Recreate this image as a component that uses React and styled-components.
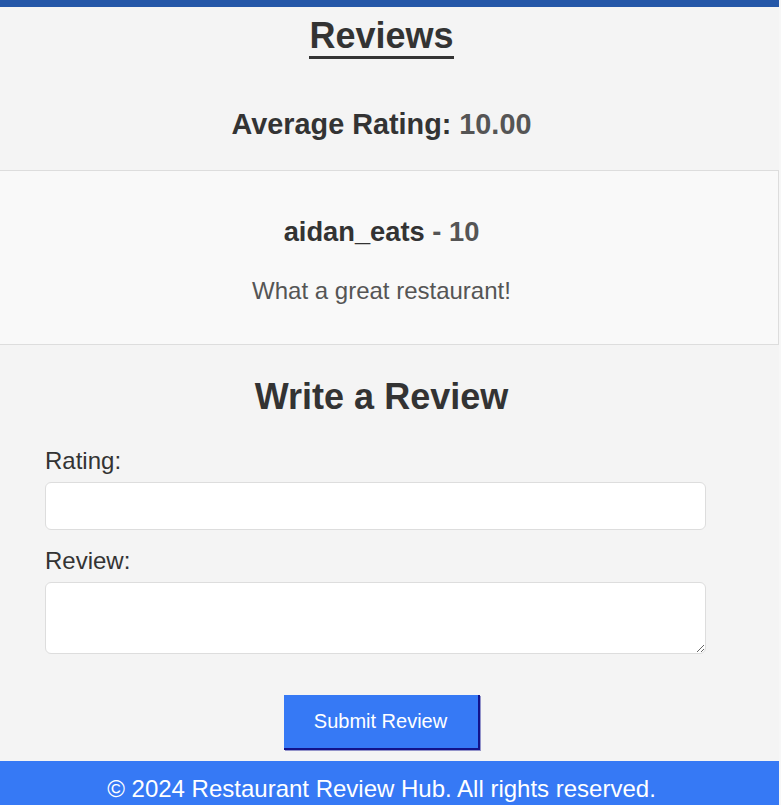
import React from "react";
import styled, { createGlobalStyle } from "styled-components";

const GlobalStyle = createGlobalStyle`
  html { background: #f7f7f7; }
  body {
    margin: 0;
    overflow: hidden;
    font-family: "Liberation Sans", Arial, Helvetica, sans-serif;
  }
  * { box-sizing: border-box; }
`;

const Page = styled.div`
  width: 795px;
  margin-left: -16px;
  background: #f4f4f4;
  color: #333;
`;

const TopBar = styled.div`
  height: 7px;
  background: #2457a8;
`;

const ReviewsSection = styled.section`
  padding-top: 8px;
  text-align: center;
`;

const Title = styled.h2`
  width: fit-content;
  margin: 0 auto;
  font-size: 36px;
  line-height: 41px;
  font-weight: bold;
  color: #333;
  border-bottom: 3px solid #333;
`;

const Average = styled.p`
  margin: 49px 0 0;
  font-size: 28.8px;
  line-height: 33px;
  font-weight: bold;
  color: #333;
`;

const Muted = styled.span`
  color: #555;
`;

const Card = styled.article`
  margin-top: 29px;
  padding: 45px 20px 39px;
  background: #f9f9f9;
  border: 1px solid #ddd;
  text-align: center;
`;

const Reviewer = styled.h3`
  margin: 0;
  font-size: 27.3px;
  line-height: 31px;
  font-weight: bold;
  color: #333;
`;

const ReviewText = styled.p`
  margin: 30px 0 0;
  font-size: 24px;
  line-height: 28px;
  color: #555;
`;

const FormSection = styled.section`
  padding-top: 31px;
`;

const FormTitle = styled.h2`
  margin: 0;
  text-align: center;
  font-size: 36px;
  line-height: 41px;
  font-weight: bold;
  color: #333;
`;

const Form = styled.form`
  padding-top: 30px;
`;

const Fields = styled.div`
  padding-left: 61px;
`;

const Label = styled.label`
  display: block;
  margin-top: ${(p) => p.$gap || 0}px;
  margin-bottom: 7px;
  font-size: 24px;
  line-height: 28px;
  color: #333;
`;

const fieldBase = `
  display: block;
  width: 661px;
  background: #fff;
  border: 1px solid #ddd;
  border-radius: 6px;
  font-family: "Liberation Sans", Arial, sans-serif;
  font-size: 20px;
  padding: 8px 12px;
  outline: none;
`;

const Input = styled.input`
  ${fieldBase}
  height: 48px;
`;

const TextArea = styled.textarea`
  ${fieldBase}
  height: 72px;
  resize: vertical;
`;

const SubmitButton = styled.button`
  display: block;
  width: 196px;
  height: 55px;
  margin: 41px auto 0;
  background: #3679f5;
  color: #fff;
  font-family: "Liberation Sans", Arial, sans-serif;
  font-size: 20px;
  border: none;
  border-right: 2px solid #13138a;
  border-bottom: 2px solid #13138a;
  box-shadow: 1px 1px 0 #9393c9;
  padding: 0;
  cursor: pointer;
`;

const Footer = styled.footer`
  margin-top: 11px;
  padding: 14px 0;
  background: #3679f5;
  color: #fff;
  text-align: center;
  font-size: 24px;
  line-height: 28px;
`;

export default function App() {
  return (
    <>
      <GlobalStyle />
      <Page>
        <TopBar />
        <ReviewsSection>
          <Title>Reviews</Title>
          <Average>
            Average Rating: <Muted>10.00</Muted>
          </Average>
        </ReviewsSection>
        <Card>
          <Reviewer>
            aidan_eats <Muted>- 10</Muted>
          </Reviewer>
          <ReviewText>What a great restaurant!</ReviewText>
        </Card>
        <FormSection>
          <FormTitle>Write a Review</FormTitle>
          <Form onSubmit={(e) => e.preventDefault()}>
            <Fields>
              <Label htmlFor="rating">Rating:</Label>
              <Input id="rating" type="number" />
              <Label htmlFor="review" $gap={17}>
                Review:
              </Label>
              <TextArea id="review" />
            </Fields>
            <SubmitButton type="submit">Submit Review</SubmitButton>
          </Form>
        </FormSection>
        <Footer>© 2024 Restaurant Review Hub. All rights reserved.</Footer>
      </Page>
    </>
  );
}
